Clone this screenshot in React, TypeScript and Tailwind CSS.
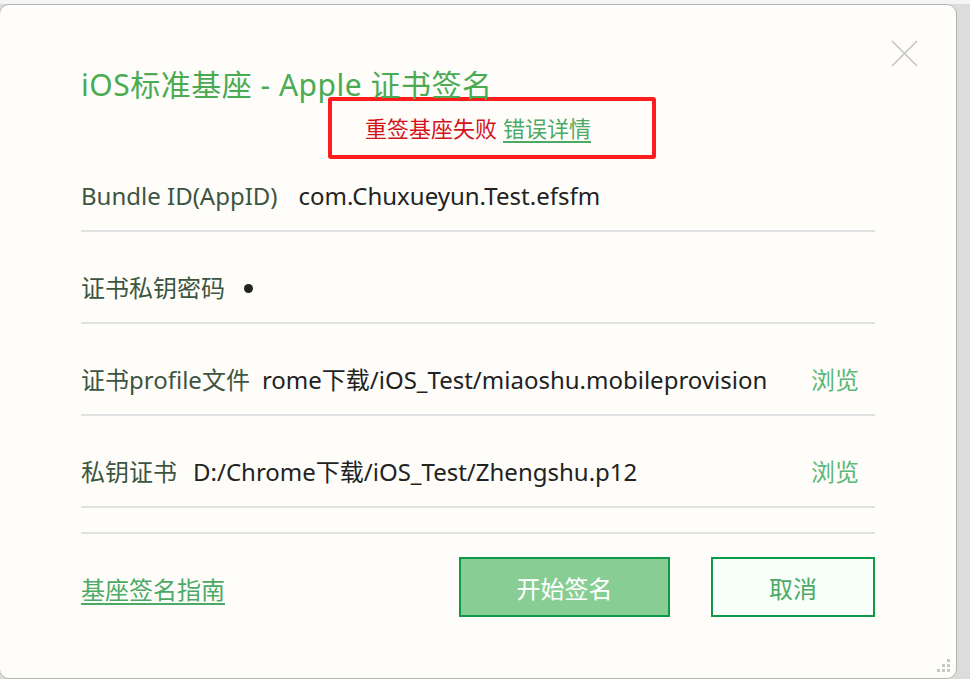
const rows = [
  { label: "Bundle ID(AppID)", value: "com.Chuxueyun.Test.efsfm", gap: "ml-[21px]" },
  { label: "证书私钥密码", value: "", gap: "ml-[19px]", dot: true },
  { label: "证书profile文件", value: "rome下载/iOS_Test/miaoshu.mobileprovision", gap: "ml-[12px]", browse: true },
  { label: "私钥证书", value: "D:/Chrome下载/iOS_Test/Zhengshu.p12", gap: "ml-[16px]", browse: true },
];

const Grip = () => (
  <div className="absolute right-[6px] bottom-[6px] grid grid-cols-3 gap-[2px]">
    {[0, 0, 1, 0, 1, 1, 1, 1, 1].map((on, i) => (
      <div key={i} className={on ? "w-[3px] h-[3px] bg-[#c8c8c8]" : "w-[3px] h-[3px]"} />
    ))}
  </div>
);

const App = () => {
  return (
    <div
      className="w-[970px] h-[679px] bg-[#dcdcdc] overflow-hidden"
      style={{ fontFamily: '"Noto Sans", "Noto Sans CJK SC", sans-serif' }}
    >
      <div className="h-[4px] bg-[#f4f4f4]" />
      <div className="relative w-[958px] h-[675px] -ml-[1px] bg-[#fefdfa] border border-[#b4b4b4] rounded-[10px] pl-[81px] pr-[81px]">
        <button className="absolute right-[38px] top-[35px]">
          <svg width="27" height="27" viewBox="0 0 27 27" stroke="#c4c4c4" strokeWidth="1.6" fill="none">
            <path d="M1 1L26 26M26 1L1 26" />
          </svg>
        </button>

        <h1 className="pt-[62px] h-[92px] text-[30px] leading-[36px] text-[#4aab52] whitespace-nowrap tracking-[0.5px]">
          iOS标准基座 - Apple 证书签名
        </h1>

        <div className="ml-[247px] w-[328px] h-[62px] border-[4px] border-[#ff1c1c] rounded-[3px] flex items-center pl-[33px] text-[22px] leading-none">
          <span className="text-[#d4141c]">重签基座失败</span>
          <a className="ml-[6px] text-[#4caa66] underline underline-offset-[4px]">错误详情</a>
        </div>

        {rows.map((r, i) => (
          <div
            key={r.label}
            className={`${i === 0 ? "h-[73px]" : "h-[92px]"} flex items-end pb-[19px] border-b-2 border-[#e2e2e5] text-[24px] leading-[30px]`}
          >
            <span className="text-[#3d5540] whitespace-nowrap">{r.label}</span>
            <span className={`${r.gap} text-[#222] whitespace-nowrap flex-1 flex items-center h-[30px]`}>
              {r.dot ? <span className="w-[9px] h-[9px] rounded-full bg-[#222]" /> : r.value}
            </span>
            {r.browse && <span className="text-[#5cb878] mr-[16px]">浏览</span>}
          </div>
        ))}

        <div className="h-[26px] border-b-2 border-[#e2e2e5]" />

        <div className="mt-[23px] flex items-center">
          <a className="pt-[5px] text-[24px] text-[#4caa66] underline underline-offset-[4px]">基座签名指南</a>
          <button className="ml-auto w-[211px] h-[60px] pt-[3px] bg-[#88ce94] border-2 border-[#0f9a4a] text-white text-[24px]">
            开始签名
          </button>
          <button className="ml-[41px] w-[164px] h-[60px] pt-[3px] bg-[#f8fffa] border-2 border-[#0f9a4a] text-[#4caa66] text-[24px]">
            取消
          </button>
        </div>

        <Grip />
      </div>
    </div>
  );
};

export default App;
